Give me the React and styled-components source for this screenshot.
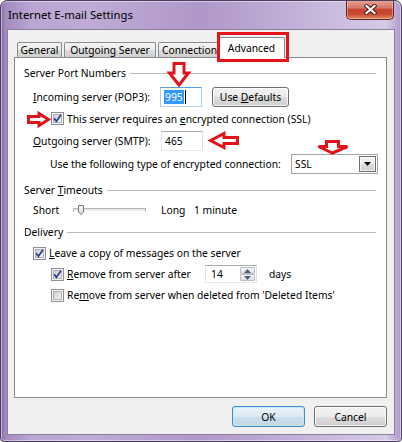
import React from 'react';
import styled, { createGlobalStyle } from 'styled-components';

const FONT = `"Noto Sans", "Segoe UI", sans-serif`;

const GlobalStyle = createGlobalStyle`
  html, body { margin: 0; padding: 0; background: #ffffff; }
  body { font-family: ${FONT}; font-size: 10.3px; color: #000; }
  *, *::before, *::after { box-sizing: border-box; }
`;

const Window = styled.div`
  position: relative;
  width: 402px;
  height: 442px;
  display: flex;
  flex-direction: column;
  padding: 0 6px 6px 6px;
  border: 1px solid #4d3e60;
  border-radius: 7px 7px 4px 4px;
  background: linear-gradient(90deg, #8a6eaa 0px, #a48bc1 5px, #bba5d3 30px, #bfabd6 90px, #b097c9 200px, #c4b2d9 300px, #d6cae6 385px, #ae97c8 401px);
  box-shadow: inset 0 0 0 1px rgba(255, 255, 255, 0.45);
  overflow: hidden;
`;

const TitleBar = styled.div`
  height: 28px;
  flex-shrink: 0;
  display: flex;
  justify-content: space-between;
  align-items: flex-start;
`;

const Title = styled.div`
  padding: 6px 0 0 1px;
  line-height: 16px;
  font-size: 11.3px;
  white-space: nowrap;
`;

const CloseButton = styled.div`
  width: 48px;
  height: 20px;
  margin: -1px 1px 0 0;
  display: flex;
  align-items: center;
  justify-content: center;
  border: 1px solid #5e2620;
  border-top: none;
  border-radius: 0 0 5px 5px;
  background: linear-gradient(#e9a697 0%, #d6796a 40%, #c4402e 52%, #cc4a32 75%, #e3865c 100%);
  box-shadow: inset 0 0 0 1px rgba(255, 255, 255, 0.35);
`;

const Client = styled.div`
  flex: 1;
  display: flex;
  flex-direction: column;
  background: #f0f0f0;
  border: 1px solid #8b7e9d;
  padding: 0 7px 0 6px;
`;

const TabStrip = styled.div`
  display: flex;
  align-items: flex-end;
  height: 20px;
  margin-top: 7px;
  padding-left: 3px;
  gap: 2px;
  flex-shrink: 0;
`;

const Tab = styled.div`
  position: relative;
  width: ${(p) => p.$w}px;
  height: ${(p) => (p.$active ? 21 : 15)}px;
  margin-left: ${(p) => p.$ml || 0}px;
  margin-bottom: ${(p) => (p.$active ? -1 : 0)}px;
  z-index: ${(p) => (p.$active ? 2 : 1)};
  display: flex;
  align-items: center;
  justify-content: center;
  border: 1px solid #898c95;
  border-bottom: none;
  border-radius: 2px 2px 0 0;
  background: ${(p) =>
    p.$active ? '#ffffff' : 'linear-gradient(#f3f3f3, #ebebeb 50%, #dddddd 50%, #cfcfcf)'};
  white-space: nowrap;
  line-height: 14px;
`;

const RedFrame = styled.div`
  position: absolute;
  left: -2px;
  top: -6px;
  width: 72px;
  height: 30px;
  border: 3px solid #e8141c;
  pointer-events: none;
`;

const Panel = styled.div`
  position: relative;
  height: 341px;
  flex-shrink: 0;
  border: 1px solid #898c95;
  background: #ffffff;
  display: flex;
  flex-direction: column;
  padding: 7px 10px 0 9px;
`;

const Group = styled.div`
  display: flex;
  align-items: center;
  gap: 4px;
  height: 16px;
  margin-top: ${(p) => p.$mt || 0}px;
  white-space: nowrap;
  &::after {
    content: '';
    flex: 1;
    height: 1px;
    background: #bcbcbc;
  }
`;

const Row = styled.div`
  display: flex;
  align-items: center;
  height: ${(p) => p.$h}px;
  margin-top: ${(p) => p.$mt}px;
  padding-left: ${(p) => p.$indent}px;
  gap: ${(p) => p.$gap || 0}px;
  white-space: nowrap;
`;

const Label = styled.span`
  width: ${(p) => p.$w}px;
  flex-shrink: 0;
  margin-right: ${(p) => p.$mr || 0}px;
`;

const U = styled.span`
  text-decoration: underline;
  text-underline-offset: 1px;
`;

const Field = styled.div`
  position: relative;
  width: ${(p) => p.$w}px;
  height: ${(p) => p.$h || 20}px;
  flex-shrink: 0;
  display: flex;
  align-items: center;
  padding-left: ${(p) => p.$pl ?? 3}px;
  margin-right: ${(p) => p.$mr || 0}px;
  background: #ffffff;
  border: 1px solid;
  border-color: ${(p) =>
    p.$focused ? '#569de5 #a8cdf0 #b6d6f2 #a8cdf0' : '#abadb3 #dbdfe6 #e3e9ef #e2e3ea'};
`;

const Selected = styled.span`
  background: #3399ff;
  color: #ffffff;
  line-height: 14px;
  padding: 0 1px;
`;

const Caret = styled.span`
  width: 1px;
  height: 14px;
  background: #000;
  margin-left: 1px;
`;

const PushButton = styled.div`
  width: ${(p) => p.$w}px;
  height: ${(p) => p.$h}px;
  flex-shrink: 0;
  display: flex;
  align-items: center;
  justify-content: center;
  white-space: nowrap;
  border: 1px solid ${(p) => (p.$default ? '#3c8ccf' : '#707070')};
  border-radius: 3px;
  background: ${(p) =>
    p.$default
      ? 'linear-gradient(#eaf4fb 0%, #dde9f2 50%, #cddfec 50%, #c3d7e6 100%)'
      : 'linear-gradient(#f2f2f2 0%, #ebebeb 50%, #dddddd 50%, #cfcfcf 100%)'};
  box-shadow: inset 0 0 0 1px ${(p) => (p.$default ? '#c6e6fa' : 'rgba(255,255,255,0.75)')};
`;

const SelectBox = styled.div`
  position: relative;
  width: 87px;
  height: 20px;
  flex-shrink: 0;
  display: flex;
  align-items: stretch;
  border: 1px solid #a5a5a5;
  background: #ffffff;
`;

const SelectValue = styled.span`
  flex: 1;
  display: flex;
  align-items: center;
  padding-left: 3px;
`;

const SelectButton = styled.div`
  width: 17px;
  margin: 1px;
  display: flex;
  align-items: center;
  justify-content: center;
  border: 1px solid #707070;
  background: linear-gradient(#f2f2f2 0%, #ebebeb 50%, #dddddd 50%, #cfcfcf 100%);
  box-shadow: inset 0 0 0 1px rgba(255, 255, 255, 0.7);
`;

const SpinValue = styled.span`
  flex: 1;
`;

const SpinButtons = styled.div`
  width: 16px;
  height: 100%;
  display: flex;
  flex-direction: column;
  padding: 1px 1px 1px 0;
`;

const SpinHalf = styled.div`
  flex: 1;
  display: flex;
  align-items: center;
  justify-content: center;
  border: 1px solid #b9bcc2;
  border-radius: 1px;
  background: linear-gradient(#f6f6f6, #dedfe2);
`;

const CheckWrap = styled.span`
  position: relative;
  width: 13px;
  height: 13px;
  flex-shrink: 0;
  display: inline-flex;
`;

const Arrow = styled.svg`
  position: absolute;
  left: ${(p) => p.$x}px;
  top: ${(p) => p.$y}px;
  overflow: visible;
  pointer-events: none;
`;

const SliderSvg = styled.svg`
  flex-shrink: 0;
  margin-right: 15px;
`;

const ButtonRow = styled.div`
  display: flex;
  justify-content: flex-end;
  gap: 9px;
  margin-top: 8px;
`;

const RED = '#e3131b';

const RedArrow = ({ x, y, w, h, points }) => (
  <Arrow $x={x} $y={y} width={w} height={h} viewBox={`0 0 ${w} ${h}`}>
    <polygon points={points} fill="#ffffff" stroke={RED} strokeWidth="3" strokeLinejoin="miter" />
  </Arrow>
);

const CheckBox = ({ checked, children }) => (
  <CheckWrap>
    <svg width="13" height="13" viewBox="0 0 13 13">
      <defs>
        <linearGradient id="cbfill" x1="0" y1="0" x2="1" y2="1">
          <stop offset="0" stopColor="#c9cdd3" />
          <stop offset="1" stopColor="#f7f7f7" />
        </linearGradient>
      </defs>
      <rect x="0.5" y="0.5" width="12" height="12" fill="#f6f6f6" stroke="#8e8f8f" />
      <rect x="2.5" y="2.5" width="8" height="8" fill="url(#cbfill)" stroke="#aeb2b8" />
      {checked && (
        <path d="M3.2 6.3 L5.4 9.2 L10 2.8" fill="none" stroke="#2b3f8c" strokeWidth="1.7" />
      )}
    </svg>
    {children}
  </CheckWrap>
);

export default function App() {
  return (
    <>
      <GlobalStyle />
      <Window>
        <TitleBar>
          <Title>Internet E-mail Settings</Title>
          <CloseButton>
            <svg width="13" height="11" viewBox="0 0 13 11">
              <path d="M2.5 2 L10.5 9 M10.5 2 L2.5 9" stroke="#4a1a14" strokeWidth="4.2" strokeLinecap="square" />
              <path d="M2.5 2 L10.5 9 M10.5 2 L2.5 9" stroke="#ffffff" strokeWidth="2.2" strokeLinecap="square" />
            </svg>
          </CloseButton>
        </TitleBar>

        <Client>
          <TabStrip>
            <Tab $w={45}>General</Tab>
            <Tab $w={92}>Outgoing Server</Tab>
            <Tab $w={63}>Connection</Tab>
            <Tab $w={67} $ml={-5} $active>
              Advanced
              <RedFrame />
            </Tab>
          </TabStrip>

          <Panel>
            <Group>
              <span>Server Port Numbers</span>
            </Group>

            <Row $h={20} $mt={6} $indent={9}>
              <Label $w={127}>
                <U>I</U>ncoming server (POP3):
              </Label>
              <Field $w={42} $focused $mr={10}>
                <Selected>995</Selected>
                <Caret />
                <RedArrow
                  x={7}
                  y={-26}
                  w={22}
                  h={25}
                  points="6,1.5 16,1.5 16,11 20.5,11 11,23 1.5,11 6,11"
                />
              </Field>
              <PushButton $w={77} $h={20}>
                <span>
                  Use <U>D</U>efaults
                </span>
              </PushButton>
            </Row>

            <Row $h={15} $mt={4} $indent={27} $gap={3}>
              <CheckBox checked>
                <RedArrow
                  x={-24}
                  y={0}
                  w={23}
                  h={15}
                  points="1.5,4.5 12,4.5 12,1.5 21.5,7.5 12,13.5 12,10.5 1.5,10.5"
                />
              </CheckBox>
              <span>
                This server requires an <U>e</U>ncrypted connection (SSL)
              </span>
            </Row>

            <Row $h={20} $mt={5} $indent={9}>
              <Label $w={128}>
                <U>O</U>utgoing server (SMTP):
              </Label>
              <Field $w={42}>
                <span>465</span>
                <RedArrow
                  x={47}
                  y={0}
                  w={30}
                  h={17}
                  points="1.5,8.5 15,1.5 15,5.5 28.5,5.5 28.5,11.5 15,11.5 15,15.5"
                />
              </Field>
            </Row>

            <Row $h={20} $mt={3} $indent={26}>
              <Label $w={241}>Use the following type of encrypted connection:</Label>
              <SelectBox>
                <SelectValue>SSL</SelectValue>
                <SelectButton>
                  <svg width="7" height="4" viewBox="0 0 7 4">
                    <path d="M0 0 H7 L3.5 4 Z" fill="#000" />
                  </svg>
                </SelectButton>
                <RedArrow
                  x={25}
                  y={-15}
                  w={32}
                  h={15}
                  points="9.5,1.5 21.5,1.5 21.5,6.5 30.5,6.5 15.5,13 1.5,6.5 9.5,6.5"
                />
              </SelectBox>
            </Row>

            <Group $mt={8}>
              <span>
                Server <U>T</U>imeouts
              </span>
            </Group>

            <Row $h={16} $mt={4} $indent={9}>
              <Label $w={40}>Short</Label>
              <SliderSvg width="73" height="16" viewBox="0 0 73 16">
                <defs>
                  <linearGradient id="thumb" x1="0" y1="0" x2="0" y2="1">
                    <stop offset="0" stopColor="#fbfbfb" />
                    <stop offset="1" stopColor="#d9d9d9" />
                  </linearGradient>
                </defs>
                <rect x="0.5" y="6.5" width="72" height="3" fill="#e7eaea" stroke="#b5b5b5" />
                <line x1="1" y1="9.5" x2="72" y2="9.5" stroke="#ffffff" />
                <path d="M5.5 3.5 H10.5 V10 L8 12.5 L5.5 10 Z" fill="url(#thumb)" stroke="#7b7b7b" />
              </SliderSvg>
              <Label $w={33}>Long</Label>
              <span>1 minute</span>
            </Row>

            <Group $mt={6}>
              <span>Delivery</span>
            </Group>

            <Row $h={16} $mt={5} $indent={9} $gap={3}>
              <CheckBox checked />
              <span>
                <U>L</U>eave a copy of messages on the server
              </span>
            </Row>

            <Row $h={18} $mt={4} $indent={27} $gap={3}>
              <CheckBox checked />
              <Label $w={135}>
                <U>R</U>emove from server after
              </Label>
              <Field $w={52} $h={18} $pl={5} $mr={9}>
                <SpinValue>14</SpinValue>
                <SpinButtons>
                  <SpinHalf>
                    <svg width="7" height="4" viewBox="0 0 7 4">
                      <path d="M0 4 H7 L3.5 0 Z" fill="#4d5f80" />
                    </svg>
                  </SpinHalf>
                  <SpinHalf>
                    <svg width="7" height="4" viewBox="0 0 7 4">
                      <path d="M0 0 H7 L3.5 4 Z" fill="#4d5f80" />
                    </svg>
                  </SpinHalf>
                </SpinButtons>
              </Field>
              <span>days</span>
            </Row>

            <Row $h={16} $mt={4} $indent={27} $gap={3}>
              <CheckBox />
              <span>
                Re<U>m</U>ove from server when deleted from 'Deleted Items'
              </span>
            </Row>
          </Panel>

          <ButtonRow>
            <PushButton $w={73} $h={21} $default>
              OK
            </PushButton>
            <PushButton $w={73} $h={21}>
              Cancel
            </PushButton>
          </ButtonRow>
        </Client>
      </Window>
    </>
  );
}
